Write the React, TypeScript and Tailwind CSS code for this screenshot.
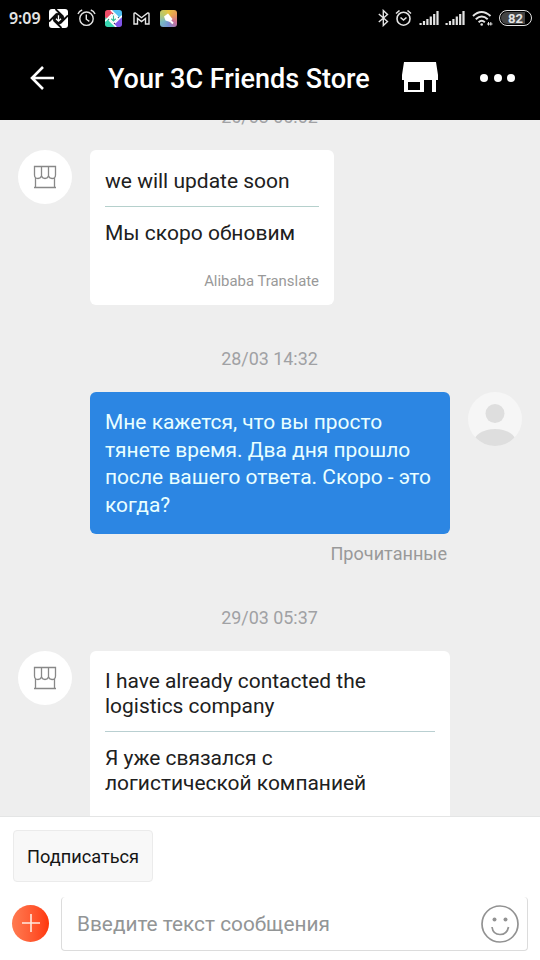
import type { ReactNode } from "react";

function SignalBars() {
  return (
    <svg width="20" height="14" viewBox="0 0 20 14" fill="#e4e4e4">
      <rect x="0.5" y="12" width="2.2" height="2" />
      <rect x="3.9" y="10" width="2.2" height="4" />
      <rect x="7.3" y="8" width="2.2" height="6" />
      <rect x="10.7" y="5.5" width="2.2" height="8.5" />
      <rect x="14.1" y="3" width="2.2" height="11" />
      <rect x="17.4" y="0" width="2.2" height="14" />
    </svg>
  );
}

type PinwheelProps = { size: number; colors: string[]; ink: string; arrow: string };

// four blades around a diamond with a download arrow inside
function Pinwheel({ size, colors, ink, arrow }: PinwheelProps) {
  return (
    <svg width={size} height={size} viewBox="0 0 19 19">
      <path d="M3 0H12L6.5 6.5L0 11V3Q0 0 3 0Z" fill={colors[0]} />
      <path d="M8 0H16Q19 0 19 3V11L12 6.5Z" fill={colors[1]} />
      <path d="M19 8V16Q19 19 16 19H8L12.5 12.5Z" fill={colors[2]} />
      <path d="M11 19H3Q0 19 0 16V8L6.5 12Z" fill={colors[3]} />
      <path d="M6.5 0L14.5 8M19 6.5L11 14.5M12.5 19L4.5 11M0 12.5L8 4.5" stroke={ink} strokeWidth="1.8" fill="none" />
      <path d="M9.5 3.5L15.5 9.5L9.5 15.5L3.5 9.5Z" fill={ink} />
      <path d="M9.5 6.2V12M7 9.8L9.5 12.2L12 9.8" stroke={arrow} strokeWidth="1.3" fill="none" />
    </svg>
  );
}

function StatusBar() {
  return (
    <div className="flex h-9 items-center justify-between pl-[9px] pr-2 text-[#e4e4e4]">
      <div className="flex items-center">
        <span className="w-10 text-base font-semibold leading-none font-['Noto_Sans',sans-serif] tracking-[-0.1px]">9:09</span>
        <Pinwheel size={19} colors={["#fff", "#fff", "#fff", "#fff"]} ink="#0b0b0b" arrow="#fff" />
        <svg className="ml-[9px]" width="19" height="18" viewBox="0 0 19 18" fill="none" stroke="#e4e4e4" strokeWidth="1.4">
          <circle cx="9.5" cy="9.7" r="6.7" />
          <path d="M9.3 5.5v4.7l3 2.2M1 5Q2 2 5.2 1M18 5Q17 2 13.8 1" />
        </svg>
        <div className="ml-[9px]">
          <Pinwheel size={17} colors={["#ef4d68", "#51bff2", "#8055e8", "#39d6b1"]} ink="#fff" arrow="#36bd9c" />
        </div>
        <svg className="ml-[11px]" width="17" height="13" viewBox="0 0 17 13" fill="none" stroke="#e8e8e8" strokeWidth="1.4">
          <path d="M1 12V2Q1 .8 2.3 1L8.5 5.7L14.7 1Q16 .8 16 2V12H12.5V6.5L8.5 9.5L4.5 6.5V12Z" />
        </svg>
        <div className="ml-2.5 flex size-[17px] items-center justify-center rounded-[3px] bg-[conic-gradient(#e8c43f,#e79b57,#c86f9a,#758fd4,#78b9c4,#b7c86d,#e8c43f)]">
          <svg width="13" height="13" viewBox="0 0 13 13" fill="#fff">
            <path d="M2 4.5L6 1.5L10.5 7L8 10L3.5 8.5Z" />
            <path d="M8.5 9L11 11.5" stroke="#fff" strokeWidth="2" />
          </svg>
        </div>
      </div>
      <div className="flex items-center">
        <svg width="11" height="18" viewBox="0 0 11 18" fill="none" stroke="#e4e4e4" strokeWidth="1.4">
          <path d="M.8 5L9.5 12.5L5.3 16.5V1.5L9.5 5.5L.8 13" />
        </svg>
        <svg className="ml-1.5" width="17" height="18" viewBox="0 0 17 18" fill="none" stroke="#e4e4e4" strokeWidth="1.6">
          <circle cx="8.5" cy="9.7" r="6.5" />
          <path d="M5.5 8.5L8.5 11L11.5 8.5M1 4.5L4.5 1.5M16 4.5L12.5 1.5" />
        </svg>
        <div className="ml-[7px] mr-1.5"><SignalBars /></div>
        <SignalBars />
        <svg className="ml-[7px]" width="21" height="17" viewBox="0 0 21 17" fill="none" stroke="#e4e4e4" strokeWidth="2">
          <path d="M1 6Q9.5-2 18.5 6M3.8 9.3Q9.7 3.8 15.7 9.3M6.6 12.2Q9.7 9.3 12.8 12.2" />
          <circle cx="9.7" cy="14.5" r="1.3" fill="#e4e4e4" stroke="none" />
          <path d="M16.5 12v3.5M18.8 12v3.5M15 14h5.5" strokeWidth="1" />
        </svg>
        <div className="ml-1.5 flex h-4 w-[33px] items-center justify-center rounded-full border-[1.5px] border-[#e4e4e4] p-px">
          <span className="flex h-full w-full items-center justify-center rounded-full bg-[linear-gradient(90deg,#444_82%,#000_82%)] text-[13px] font-bold leading-none">82</span>
        </div>
      </div>
    </div>
  );
}

function Header() {
  return (
    <header className="flex h-[83px] items-center pl-[30px] pr-6 text-white">
      <svg className="shrink-0" width="24" height="24" viewBox="0 0 24 24" fill="none" stroke="white" strokeWidth="2.6">
        <path d="M24 12H2M13 1L2 12L13 23" />
      </svg>
      <h1 className="ml-[54px] w-[294px] whitespace-nowrap pt-[3px] text-[27px] font-medium leading-8 tracking-[-0.03px]">
        Your 3C Friends Store
      </h1>
      <svg className="mb-0.5 shrink-0" width="36" height="30" viewBox="0 0 36 30">
        <path d="M2 0H34L36 13V18H34V30H30V18H22V30H2V18H0V13ZM6 20V28H18V20Z" fill="white" fillRule="evenodd" />
      </svg>
      <div className="ml-auto mr-px flex gap-[5.5px]">
        <i className="size-2 rounded-full bg-white" />
        <i className="size-2 rounded-full bg-white" />
        <i className="size-2 rounded-full bg-white" />
      </div>
    </header>
  );
}

function StoreAvatar() {
  return (
    <div className="mr-[18px] flex size-[54px] shrink-0 items-center justify-center rounded-full bg-white">
      <svg width="24" height="24" viewBox="0 0 24 24" fill="none" stroke="#888" strokeWidth="1.3">
        <path d="M1.5 1.5H22.5V10Q22.5 13.5 19 13.5Q16 13.5 15.5 10.5Q15 13.5 12 13.5Q9 13.5 8.5 10.5Q8 13.5 5 13.5Q1.5 13.5 1.5 10ZM8.5 1.5V11M15.5 1.5V11M2.5 13V22.5M21.5 13V22.5M1 22.5H23" />
      </svg>
    </div>
  );
}

function DateLabel({ children }: { children: ReactNode }) {
  return <div className="pr-px text-center text-[17.9px] leading-[21px] text-[#a0a1a4]">{children}</div>;
}

export default function App() {
  return (
    <div className="flex h-[960px] w-[540px] flex-col overflow-hidden bg-white font-[Roboto,sans-serif]">
      <div className="h-[120px] shrink-0 bg-black">
        <StatusBar />
        <Header />
      </div>

      <main className="h-[696px] shrink-0 overflow-hidden bg-[#eee]">
        <div className="-mt-[14px] flex flex-col">
          <DateLabel>26/03 06:02</DateLabel>

          <div className="mt-[23px] flex items-start pl-[18px]">
            <StoreAvatar />
            <div className="h-[155px] w-[244px] rounded-md bg-white px-[15px] pt-[19px] text-[21px] leading-[25px] text-[#202020]">
              <p>we will update soon</p>
              <div className="mt-3 h-px bg-[#b5d0cc]" />
              <p className="mt-[14px]">Мы скоро обновим</p>
              <p className="mt-[25px] text-right text-[14.9px] leading-5 text-[#999]">Alibaba Translate</p>
            </div>
          </div>

          <div className="mt-[43px]"><DateLabel>28/03 14:32</DateLabel></div>

          <div className="mt-[23px] flex items-start pl-[90px]">
            <p className="h-[142px] w-[360px] rounded-md bg-[#2c86e3] pl-[15px] pt-[17px] text-[20.95px] leading-[27.5px] text-[#e9ffff]">
              Мне кажется, что вы просто<br />
              тянете время. Два дня прошло<br />
              после вашего ответа. Скоро - это<br />
              когда?
            </p>
            <svg className="ml-[18px]" width="54" height="54" viewBox="0 0 54 54">
              <clipPath id="person"><circle cx="27" cy="27" r="27" /></clipPath>
              <circle cx="27" cy="27" r="27" fill="#f6f6f6" />
              <circle cx="27" cy="21.5" r="9.5" fill="#dedede" />
              <ellipse cx="27" cy="50" rx="21" ry="13" fill="#dedede" clipPath="url(#person)" />
            </svg>
          </div>
          <p className="mt-[10px] pr-[93px] text-right text-[18.1px] leading-5 text-[#999]">Прочитанные</p>

          <div className="mt-[43px]"><DateLabel>29/03 05:37</DateLabel></div>

          <div className="mt-[23px] flex items-start pl-[18px]">
            <StoreAvatar />
            <div className="h-[180px] w-[360px] rounded-md bg-white px-[15px] pt-[18px] text-[20.95px] leading-[25px] text-[#202020]">
              <p>I have already contacted the<br />logistics company</p>
              <div className="mt-3 h-px bg-[#b9cfd1]" />
              <p className="mt-[14px]">Я уже связался с<br />логистической компанией</p>
            </div>
          </div>
        </div>
      </main>

      <footer className="h-36 border-t border-[#e4e5e5] pl-3 pr-3 pt-[13px]">
        <button className="ml-px h-[52px] w-[140px] rounded border border-[#ebebeb] bg-[#f8f8f8] pt-0.5 text-[18.2px] text-[#151515]">
          Подписаться
        </button>
        <div className="mt-[15px] flex items-center">
          <button className="mb-0.5 flex size-[37px] items-center justify-center rounded-full bg-linear-to-r from-[#ff7a50] to-[#ff3505]">
            <svg width="18" height="18" viewBox="0 0 18 18" stroke="#ffe9df" strokeWidth="1.6">
              <path d="M9 0V18M0 9H18" />
            </svg>
          </button>
          <div className="ml-3 flex h-[54px] w-[467px] items-center justify-between rounded border border-t-0 border-[#dcdcdc] pl-[15px] pr-2">
            <span className="pt-[3px] text-[20.8px] text-[#929596]">Введите текст сообщения</span>
            <svg width="38" height="38" viewBox="0 0 38 38" fill="none" stroke="#929292" strokeWidth="1.7">
              <circle cx="19" cy="19" r="18" />
              <circle cx="13.5" cy="14.5" r="2" fill="#929292" stroke="none" />
              <circle cx="24.5" cy="14.5" r="2" fill="#929292" stroke="none" />
              <path d="M11 22Q12 29.5 19 29.5Q26 29.5 27.5 22" />
            </svg>
          </div>
        </div>
      </footer>
    </div>
  );
}
